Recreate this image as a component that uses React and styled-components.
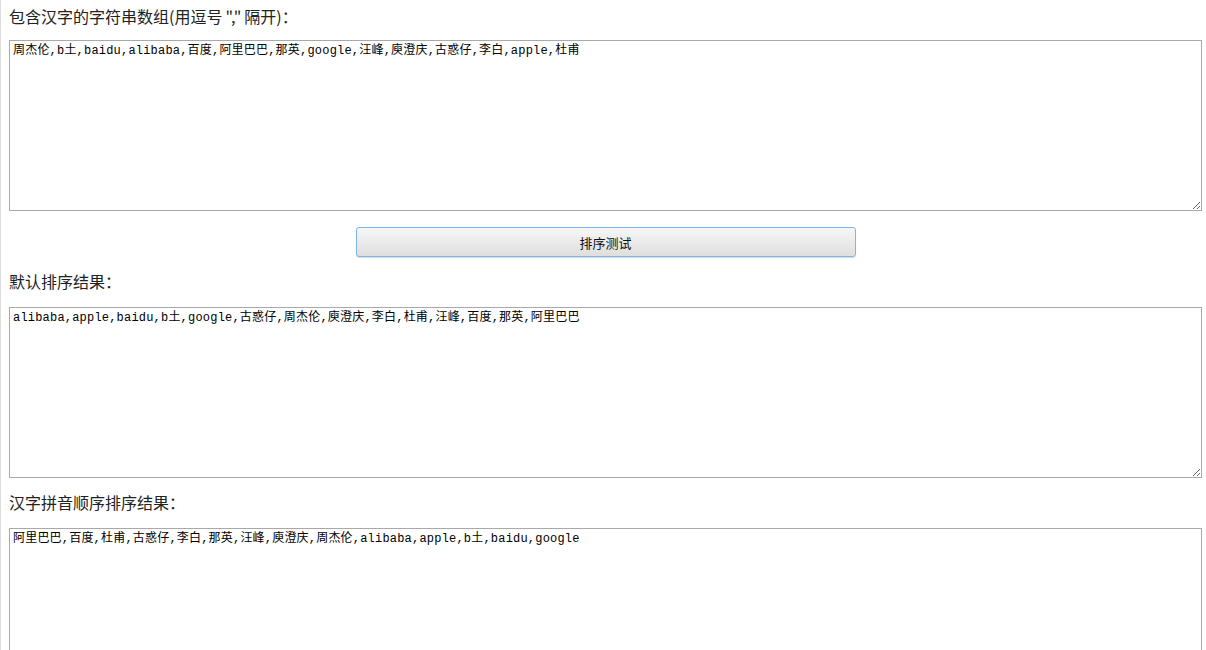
import React from 'react'
import styled, { createGlobalStyle } from 'styled-components'

const GlobalStyle = createGlobalStyle`
  html {
    border-left: 1px solid #dcdcdc;
    background: #fff;
  }
  body {
    margin: 0;
    font-family: "Noto Sans CJK SC", "Liberation Sans", sans-serif;
    color: #111;
  }
`

const Page = styled.main`
  width: 1193px;
  padding: 4px 0 0 8px;
`

const Label = styled.div`
  font-size: 16px;
  line-height: 24px;
  color: #222;
  margin: ${p => (p.$first ? '0 0 12px' : '12px 0 14px')};
`

const Quote = styled.span`
  padding: 0 3px;
`

const TextBox = styled.textarea`
  display: block;
  box-sizing: border-box;
  width: 1193px;
  height: 171px;
  margin: 0;
  padding: 2px 3px;
  border: 1px solid #a9a9a9;
  font-family: "Liberation Mono", "Noto Sans CJK SC", monospace;
  font-size: 12px;
  line-height: 16px;
  letter-spacing: 0.2px;
  color: #000;
  resize: both;
  outline: none;
`

const ButtonRow = styled.div`
  display: flex;
  justify-content: center;
  margin-top: 16px;
`

const SortButton = styled.button`
  width: 500px;
  height: 30px;
  border: 1px solid #7eb4ea;
  border-radius: 3px;
  background: linear-gradient(#f7f7f7, #dedede);
  box-shadow: 0 1px 1px rgba(0, 0, 0, 0.15);
  font-family: "Noto Sans CJK SC", sans-serif;
  font-size: 13px;
  color: #111;
  cursor: pointer;
`

const source = '周杰伦,b土,baidu,alibaba,百度,阿里巴巴,那英,google,汪峰,庾澄庆,古惑仔,李白,apple,杜甫'
const defaultSorted = 'alibaba,apple,baidu,b土,google,古惑仔,周杰伦,庾澄庆,李白,杜甫,汪峰,百度,那英,阿里巴巴'
const pinyinSorted = '阿里巴巴,百度,杜甫,古惑仔,李白,那英,汪峰,庾澄庆,周杰伦,alibaba,apple,b土,baidu,google'

export default function App() {
  return (
    <>
      <GlobalStyle />
      <Page>
        <Label $first>包含汉字的字符串数组(用逗号<Quote>","</Quote>隔开)：</Label>
        <TextBox defaultValue={source} />
        <ButtonRow>
          <SortButton>排序测试</SortButton>
        </ButtonRow>
        <Label>默认排序结果：</Label>
        <TextBox defaultValue={defaultSorted} />
        <Label>汉字拼音顺序排序结果：</Label>
        <TextBox defaultValue={pinyinSorted} />
      </Page>
    </>
  )
}
